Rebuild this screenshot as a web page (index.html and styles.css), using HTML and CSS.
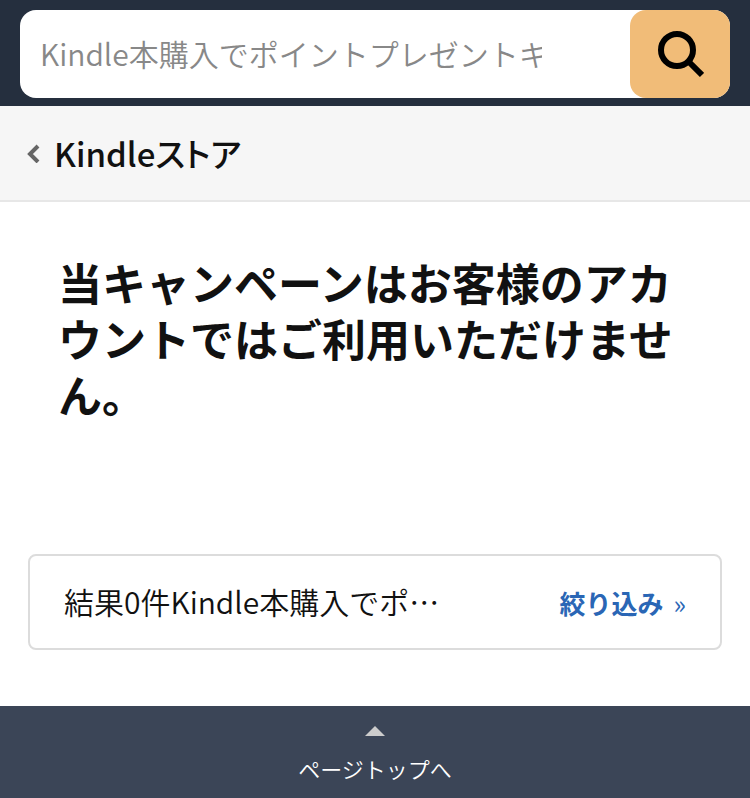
FILE: index.html
```html
<!DOCTYPE html>
<html lang="ja">
<head>
	<meta charset="UTF-8">
	<meta name="viewport" content="width=device-width, initial-scale=1.0">
	<title>Kindleストア</title>
	<link rel="stylesheet" href="styles.css">
</head>
<body>
	<header class="topbar">
		<form class="search" role="search">
			<input type="text" name="k" class="search-input" placeholder="Kindle本購入でポイントプレゼントキャンペーン" aria-label="検索">
			<button type="submit" class="search-btn" aria-label="検索">
				<svg width="48" height="48" viewBox="0 0 48 48" fill="none" stroke="#000" stroke-width="6">
					<circle cx="21" cy="20" r="16"/>
					<path d="M32 31L46 45"/>
				</svg>
			</button>
		</form>
	</header>

	<nav class="subnav">
		<a href="#" class="back">
			<svg width="14" height="20" viewBox="0 0 14 20" fill="none" stroke="#666" stroke-width="4">
				<path d="M12 3L4 11L12 19"/>
			</svg>
			<span>Kindleストア</span>
		</a>
	</nav>

	<main>
		<h1 class="message">当キャンペーンはお客様のアカウントではご利用いただけません。</h1>

		<div class="result">
			<p class="result-text">結果0件Kindle本購入でポ…</p>
			<a href="#" class="filter"><b>絞り込み</b><span>»</span></a>
		</div>
	</main>

	<footer>
		<a href="#" class="pagetop">
			<span class="arrow"></span>
			ページトップへ
		</a>
	</footer>
</body>
</html>
```
FILE: styles.css
```css
*{
	margin: 0;
	padding: 0;
	box-sizing: border-box;
}
body{
	background-color: #fff;
	color: #111;
	font-family: "Noto Sans CJK JP", sans-serif;
}
a{
	text-decoration: none;
}
.topbar{
	background-color: #252f3e;
	padding: 10px 20px 8px;
}
.search{
	display: flex;
	height: 88px;
	background-color: #fff;
	border-radius: 16px;
}
.search-input{
	flex: 1;
	min-width: 0;
	padding: 0 88px 2px 20px;
	border: none;
	outline: none;
	background: transparent;
	font-family: inherit;
	font-size: 30px;
	font-weight: 350;
}
.search-input::placeholder{
	color: #888;
	opacity: 1;
}
.search-btn{
	display: flex;
	align-items: center;
	justify-content: center;
	width: 100px;
	border: none;
	border-radius: 16px;
	background-color: #f1bc78;
	cursor: pointer;
}
.subnav{
	background-color: #f6f6f6;
	border-bottom: 2px solid #e7e7e7;
	padding: 24px 26px;
}
.back{
	display: flex;
	align-items: center;
	gap: 14px;
	color: #111;
	font-size: 33px;
	font-weight: 500;
	line-height: 46px;
	font-feature-settings: "palt";
}
.message{
	padding: 52px 58px 132px;
	font-size: 44px;
	font-weight: bold;
	line-height: 56px;
}
.result{
	display: flex;
	align-items: center;
	justify-content: space-between;
	height: 96px;
	margin: 0 28px 56px;
	padding: 0 34px;
	border: 2px solid #dcdcdc;
	border-radius: 8px;
}
.result-text{
	padding-bottom: 2px;
	font-size: 30px;
	font-weight: 350;
}
.filter{
	display: flex;
	gap: 10px;
	color: #2a66b5;
	font-size: 26px;
}
.pagetop{
	display: flex;
	flex-direction: column;
	align-items: center;
	gap: 16px;
	padding: 20px 0 14px;
	background-color: #3b4557;
	color: #fff;
	font-size: 22px;
	font-weight: 350;
	line-height: 32px;
}
.arrow{
	border: 10px solid transparent;
	border-top: none;
	border-bottom-color: #ccc;
}
```
